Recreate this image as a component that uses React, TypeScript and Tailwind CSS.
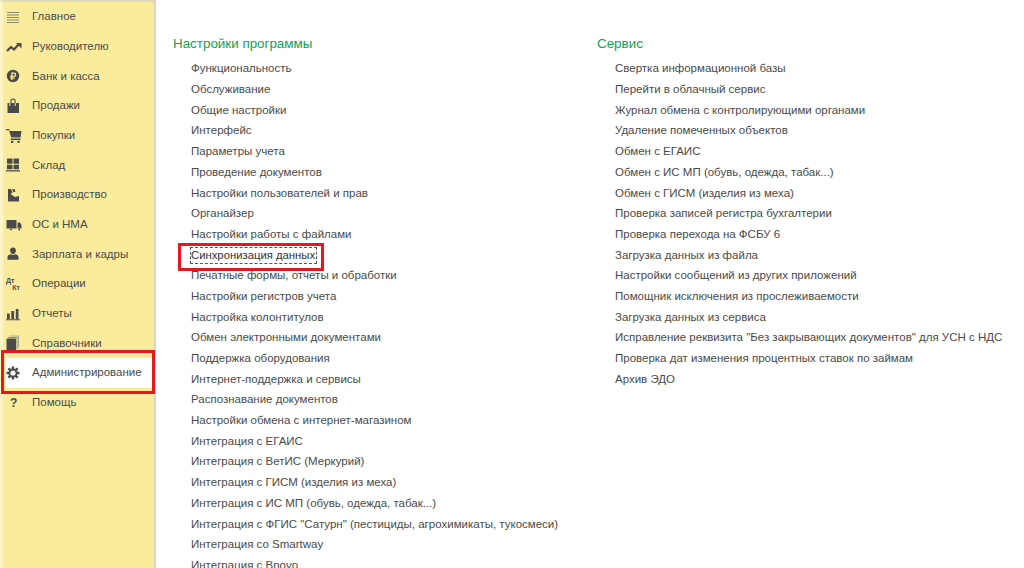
import React from 'react';

const ic = 'h-[14px] w-[14px] fill-[#4a4a4a]';

const icons: Record<string, React.ReactNode> = {
  menu: (
    <svg viewBox="0 0 14 14" className="h-[14px] w-[14px] fill-none stroke-[#8a8a70]">
      <path d="M1 2.500h12M1 5h12M1 7.500h12M1 10h12M1 12.500h12" strokeWidth="1" />
    </svg>
  ),
  trend: (
    <svg viewBox="0 0 16 14" className="h-[14px] w-[16px] fill-none stroke-[#4a4a4a]">
      <path d="M1 11 5 7l3 2.500 4.500-5" strokeWidth="2.200" />
      <path d="M10 3h5.500v5.500z" className="fill-[#4a4a4a] stroke-none" />
    </svg>
  ),
  bank: (
    <svg viewBox="0 0 14 14" className={ic}>
      <path
        fillRule="evenodd"
        d="M7 .8a6.200 6.200 0 1 1 0 12.400A6.200 6.200 0 0 1 7 .8ZM5.300 3.500v3.200H4.200v1.200h1.100v.7H4.200v1.100h1.100v1.300h1.300v-1.300h2.100V8.600H6.600v-.7h1.500a2.200 2.200 0 0 0 0-4.400ZM6.600 4.700h1.400a1 1 0 0 1 0 2H6.600Z"
      />
    </svg>
  ),
  bag: (
    <svg viewBox="0 0 14 16" className="h-[16px] w-[14px] fill-[#4a4a4a]">
      <path
        fillRule="evenodd"
        d="M4.300 5V3C4.300 1.500 5.400.6 7 .6S9.700 1.500 9.700 3v2H13v10H1.500V5h1.800v3h1V5Zm1.200 0h3V3c0-.8-.6-1.300-1.500-1.300S5.500 2.200 5.500 3Zm3.200 0v3h1V5Z"
      />
    </svg>
  ),
  cart: (
    <svg viewBox="0 0 16 16" className="h-[16px] w-[16px] fill-[#4a4a4a]">
      <path d="M0 1h3.200l.5 2H15.500l-1 6.500H5.200L3 2.300H0ZM4.800 10.500h9.700V12H4.500ZM5 12.800h2.200V15H5ZM11.500 12.800h2.200V15h-2.200Z" />
    </svg>
  ),
  store: (
    <svg viewBox="0 0 14 14" className={ic}>
      <path d="M1 .5h5.500v5.200H1ZM7.500.5H13v5.200H7.500ZM1 6.700h5.500v4.500H1ZM7.500 6.700H13v4.500H7.500ZM0 12.200h14v1.300H0Z" />
    </svg>
  ),
  factory: (
    <svg viewBox="0 0 14 14" className={ic}>
      <path d="M2 1h3l1.500 3.500L4.500 6l4.500 3 4-1v5.500H2Z" />
      <path d="M6 1.500 8.500 1l1 2.500-2 .7Z" />
    </svg>
  ),
  truck: (
    <svg viewBox="0 0 16 14" className="h-[14px] w-[16px] fill-[#4a4a4a]">
      <path
        fillRule="evenodd"
        d="M.5 2h10v8.500H6.400a1.700 1.700 0 0 0-2.800 0H.5Zm11 2.500H14L15.500 7v3.500h-.9a1.700 1.700 0 0 0-2.800 0h-.3ZM5 10.200a1.100 1.100 0 1 1 0 2.200 1.100 1.100 0 0 1 0-2.200Zm8.200 0a1.100 1.100 0 1 1 0 2.200 1.100 1.100 0 0 1 0-2.200Z"
      />
    </svg>
  ),
  person: (
    <svg viewBox="0 0 14 14" className={ic}>
      <path d="M7 .5c1.800 0 2.900 1.300 2.900 3.100S8.800 7.200 7 7.200 4.100 5.400 4.100 3.600 5.200.5 7 .5ZM4.800 7.300c1.400.9 3 .9 4.400 0 2 .5 3.300 1.300 3.300 2.700v2.800h-11V10c0-1.400 1.300-2.200 3.300-2.700Z" />
    </svg>
  ),
  bars: (
    <svg viewBox="0 0 14 14" className={ic}>
      <path d="M1 6.500h2.800V12H1ZM5.300 4h2.800v8H5.300ZM9.800 2H12.500V12H9.800ZM0 12.300h14v1H0Z" />
    </svg>
  ),
  books: (
    <svg viewBox="0 0 14 16" className="h-[16px] w-[14px] fill-[#4a4a4a]">
      <path d="M.5 3.500h9.500V15.500H.5Z" />
      <path d="M2 2h9.500v12h-1V3H2Z" className="fill-[#8e8e80]" />
      <path d="M3.500.5H13v12h-1V1.500H3.500Z" className="fill-[#a9a896]" />
    </svg>
  ),
  gear: (
    <svg viewBox="0 0 14 14" className="h-[14px] w-[14px] fill-none stroke-[#4a4a4a]">
      <circle cx="7" cy="7" r="3.600" strokeWidth="2" />
      <path
        d="M7 .5V3M7 11v2.500M.5 7H3M11 7h2.500M2.400 2.400l1.800 1.800M9.800 9.800l1.800 1.800M11.600 2.400 9.800 4.200M4.200 9.800l-1.800 1.800"
        strokeWidth="2.500"
      />
    </svg>
  ),
};

const menu: { label: string; icon?: string }[] = [
  { label: 'Главное', icon: 'menu' },
  { label: 'Руководителю', icon: 'trend' },
  { label: 'Банк и касса', icon: 'bank' },
  { label: 'Продажи', icon: 'bag' },
  { label: 'Покупки', icon: 'cart' },
  { label: 'Склад', icon: 'store' },
  { label: 'Производство', icon: 'factory' },
  { label: 'ОС и НМА', icon: 'truck' },
  { label: 'Зарплата и кадры', icon: 'person' },
  { label: 'Операции' },
  { label: 'Отчеты', icon: 'bars' },
  { label: 'Справочники', icon: 'books' },
  { label: 'Администрирование', icon: 'gear' },
  { label: 'Помощь' },
];

const settings = [
  'Функциональность',
  'Обслуживание',
  'Общие настройки',
  'Интерфейс',
  'Параметры учета',
  'Проведение документов',
  'Настройки пользователей и прав',
  'Органайзер',
  'Настройки работы с файлами',
  'Синхронизация данных',
  'Печатные формы, отчеты и обработки',
  'Настройки регистров учета',
  'Настройка колонтитулов',
  'Обмен электронными документами',
  'Поддержка оборудования',
  'Интернет-поддержка и сервисы',
  'Распознавание документов',
  'Настройки обмена с интернет-магазином',
  'Интеграция с ЕГАИС',
  'Интеграция с ВетИС (Меркурий)',
  'Интеграция с ГИСМ (изделия из меха)',
  'Интеграция с ИС МП (обувь, одежда, табак...)',
  'Интеграция с ФГИС "Сатурн" (пестициды, агрохимикаты, тукосмеси)',
  'Интеграция со Smartway',
  'Интеграция с Bnovo',
];

const service = [
  'Свертка информационной базы',
  'Перейти в облачный сервис',
  'Журнал обмена с контролирующими органами',
  'Удаление помеченных объектов',
  'Обмен с ЕГАИС',
  'Обмен с ИС МП (обувь, одежда, табак...)',
  'Обмен с ГИСМ (изделия из меха)',
  'Проверка записей регистра бухгалтерии',
  'Проверка перехода на ФСБУ 6',
  'Загрузка данных из файла',
  'Настройки сообщений из других приложений',
  'Помощник исключения из прослеживаемости',
  'Загрузка данных из сервиса',
  'Исправление реквизита "Без закрывающих документов" для УСН с НДС',
  'Проверка дат изменения процентных ставок по займам',
  'Архив ЭДО',
];

function Column({ title, items, className }: { title: string; items: string[]; className: string }) {
  return (
    <div className={className}>
      <h2 className="h-[22px] text-[13.4px] leading-[16px] font-normal text-[#13a04f]">{title}</h2>
      <ul className="mt-[0.4px] pl-[18px]">
        {items.map((item) => (
          <li key={item} className="h-[20.7px] leading-[20.7px] whitespace-nowrap">
            {item === 'Синхронизация данных' ? (
              <span className="relative -ml-px inline-block h-[17px] w-[127px] border border-dashed border-[#555] text-[11.3px] leading-[15px] text-[#333]">
                {item}
                <span className="absolute -left-[13px] -top-[5px] -right-[8px] -bottom-[8px] border-[3px] border-[#e3191f]" />
              </span>
            ) : (
              item
            )}
          </li>
        ))}
      </ul>
    </div>
  );
}

export default function App() {
  return (
    <div className="flex h-[568px] w-[1024px] overflow-hidden bg-white font-['Liberation_Sans',Arial,sans-serif] text-[11.5px] text-[#4a4a4a]">
      <aside className="flex w-[156px] shrink-0 flex-col border-t-[2px] border-l-[3px] border-r-[2px] border-t-[#ddd9bd] border-l-[#fdf5c8] border-r-[#d9d7c4] bg-[#fbec9d] pl-[3px]">
        {menu.map((m) => {
          const active = m.label === 'Администрирование';
          return (
            <div
              key={m.label}
              className={active ? 'relative flex h-[29.7px] items-center bg-white' : 'flex h-[29.7px] items-center'}
            >
              <span className="flex w-[26px] shrink-0 items-center">
                {m.icon && icons[m.icon]}
                {m.label === 'Операции' && (
                  <span className="flex w-[14px] flex-col text-[7px] leading-[7px] font-bold">
                    <span>Дт</span>
                    <span className="self-end">Кт</span>
                  </span>
                )}
                {m.label === 'Помощь' && <span className="ml-[4px] text-[12px] font-bold">?</span>}
              </span>
              <span>{m.label}</span>
              {active && (
                <span className="absolute -top-[8px] -bottom-[6px] -left-[5px] -right-[1px] border-[3px] border-[#e3191f]" />
              )}
            </div>
          );
        })}
      </aside>
      <main className="flex flex-1 items-start pt-[36px] pl-[17px]">
        <Column title="Настройки программы" items={settings} className="w-[424px] shrink-0" />
        <Column title="Сервис" items={service} className="flex-1" />
      </main>
    </div>
  );
}
